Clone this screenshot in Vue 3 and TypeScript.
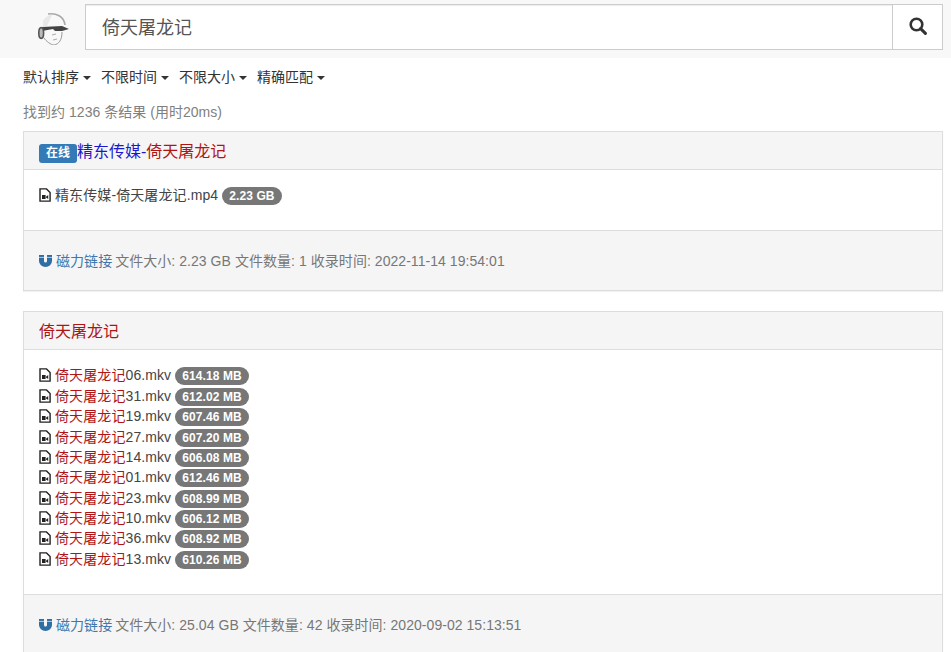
<script setup lang="ts">
interface FileRow { red: string; plain: string; size: string }
const names: [string, string][] = [
  ['06', '614.18 MB'], ['31', '612.02 MB'], ['19', '607.46 MB'], ['27', '607.20 MB'], ['14', '606.08 MB'],
  ['01', '612.46 MB'], ['23', '608.99 MB'], ['10', '606.12 MB'], ['36', '608.92 MB'], ['13', '610.26 MB'],
]
const files: FileRow[] = names.map(([n, size]) => ({ red: '倚天屠龙记', plain: n + '.mkv', size }))
const filters = ['默认排序', '不限时间', '不限大小', '精确匹配']
</script>

<template>
  <div class="page">
    <header class="top">
      <svg class="logo" width="32" height="32" viewBox="0 0 32 32">
        <path d="M5 8 C8 3 11 2 14 2 L9 13 L5 13 Z" fill="#e8e8e8" />
        <path d="M10 1 C18 0 26 3 27 12" fill="none" stroke="#aaa" stroke-width="1.6" />
        <path d="M4 14 L24 13 L31 16 L24 18 L17 18 L15 16 L4 18 Z" fill="#444" />
        <ellipse cx="3.2" cy="20" rx="2.4" ry="5.4" fill="#bbb" stroke="#555" stroke-width="1.6" />
        <path d="M6 25 C8 28 13 32 16 32 C21 31 24 27 24 19" fill="none" stroke="#999" stroke-width="1" />
        <path d="M14 22 L18 21 M15 27 L19 26" stroke="#aaa" stroke-width="1" />
      </svg>
      <div class="search">
        <div class="input">倚天屠龙记</div>
        <div class="btn">
          <svg width="18" height="18" viewBox="0 0 18 18">
            <circle cx="7.5" cy="7.5" r="5.8" fill="none" stroke="#333" stroke-width="2.6" />
            <path d="M11.6 11.6 L16.4 16.4" stroke="#333" stroke-width="3" stroke-linecap="round" />
          </svg>
        </div>
      </div>
    </header>

    <main class="content">
      <nav class="filters">
        <span v-for="f in filters" :key="f" class="filter">{{ f }}<i class="caret"></i></span>
      </nav>
      <p class="count">找到约 1236 条结果 (用时20ms)</p>

      <section class="panel">
        <h3 class="heading">
          <span class="online">在线</span><span class="blue">精东传媒-</span><span class="red">倚天屠龙记</span>
        </h3>
        <div class="body">
          <ul class="list">
            <li>
              <svg class="file" width="12" height="14" viewBox="0 0 12 14">
                <path d="M1 .9 H7.5 L11.1 4.5 V13.1 H1 Z" fill="#fff" stroke="#222" stroke-width="1.4" />
                <path d="M3 7 H6.6 V11 H3 Z M7 8.8 L9.2 7 V11 L7 9.4 Z" fill="#222" />
              </svg>
              <span class="name">精东传媒-倚天屠龙记.mp4</span>
              <span class="badge">2.23 GB</span>
            </li>
          </ul>
        </div>
        <div class="footer">
          <svg class="magnet" width="13" height="13" viewBox="0 0 13 13">
            <path d="M0 1 H5 V7 A1.5 1.5 0 0 0 8 7 V1 H13 V7 A6.5 6 0 0 1 0 7 Z" fill="#2f6ea5" />
            <path d="M0 3.4 H5 M8 3.4 H13" stroke="#f5f5f5" stroke-width=".7" />
          </svg>
          <span class="link">磁力链接</span> 文件大小: 2.23 GB 文件数量: 1 收录时间: 2022-11-14 19:54:01
        </div>
      </section>

      <section class="panel">
        <h3 class="heading"><span class="red">倚天屠龙记</span></h3>
        <div class="body">
          <ul class="list many">
            <li v-for="file in files" :key="file.plain">
              <svg class="file" width="12" height="14" viewBox="0 0 12 14">
                <path d="M1 .9 H7.5 L11.1 4.5 V13.1 H1 Z" fill="#fff" stroke="#222" stroke-width="1.4" />
                <path d="M3 7 H6.6 V11 H3 Z M7 8.8 L9.2 7 V11 L7 9.4 Z" fill="#222" />
              </svg>
              <span class="name"><span class="red">{{ file.red }}</span><span class="plain">{{ file.plain }}</span></span>
              <span class="badge">{{ file.size }}</span>
            </li>
          </ul>
        </div>
        <div class="footer">
          <svg class="magnet" width="13" height="13" viewBox="0 0 13 13">
            <path d="M0 1 H5 V7 A1.5 1.5 0 0 0 8 7 V1 H13 V7 A6.5 6 0 0 1 0 7 Z" fill="#2f6ea5" />
            <path d="M0 3.4 H5 M8 3.4 H13" stroke="#f5f5f5" stroke-width=".7" />
          </svg>
          <span class="link">磁力链接</span> 文件大小: 25.04 GB 文件数量: 42 收录时间: 2020-09-02 15:13:51
        </div>
      </section>
    </main>
  </div>
</template>

<style>
html, body { margin: 0; background: #fff; overflow: hidden; }
</style>

<style scoped>
.page {
  width: 951px;
  height: 652px;
  overflow: hidden;
  font-family: "Liberation Sans", "Noto Sans CJK SC", sans-serif;
  font-size: 14px;
  line-height: 20px;
  color: #333;
}
.top {
  display: flex;
  align-items: flex-start;
  height: 58px;
  box-sizing: border-box;
  padding: 4px 8px 0 38px;
  background: #f8f8f8;
}
.logo { margin: 9px 15px 0 0; flex: none; }
.search { display: flex; flex: 1; height: 46px; }
.input {
  flex: 1;
  box-sizing: border-box;
  border: 1px solid #ccc;
  border-right: 0;
  background: #fff;
  padding: 11px 16px 9px;
  font-size: 18px;
  line-height: 24px;
  color: #555;
  box-shadow: inset 0 1px 1px rgba(0, 0, 0, .075);
}
.btn {
  width: 51px;
  box-sizing: border-box;
  border: 1px solid #ccc;
  background: #fff;
  padding-bottom: 3px;
  display: flex;
  align-items: center;
  justify-content: center;
}
.content { padding: 0 8px 0 23px; }
.filters { display: flex; gap: 10px; padding-top: 9px; height: 21px; }
.filter { color: #333; }
.caret {
  display: inline-block;
  margin-left: 4px;
  vertical-align: middle;
  border-top: 4px solid #333;
  border-left: 4px solid transparent;
  border-right: 4px solid transparent;
}
.count { margin: 14px 0 0; height: 29px; color: #808080; letter-spacing: .03px; }
.panel {
  border: 1px solid #ddd;
  margin-bottom: 20px;
  box-shadow: 0 1px 1px rgba(0, 0, 0, .05);
}
.heading {
  margin: 0;
  height: 36px;
  padding: 1px 15px 0;
  background: #f5f5f5;
  border-bottom: 1px solid #ddd;
  font-size: 16px;
  font-weight: 400;
  line-height: 37px;
}
.online {
  display: inline-block;
  background: #337ab7;
  color: #fff;
  font-size: 12px;
  font-weight: 700;
  line-height: 12px;
  padding: 3px 7px 4px;
  border-radius: 3px;
}
.blue { color: #1a1acc; }
.red { color: #b01515; }
.body { padding: 15px; }
.list { list-style: none; margin: 0; padding: 0 0 10px; }
.list li { display: flex; align-items: center; height: 20px; line-height: 20px; }
.many { margin-top: .21px; }
.many li { height: 20.38px; }
.file { flex: none; margin-right: 4px; }
.name { color: #444; white-space: nowrap; letter-spacing: .1px; }
.badge {
  margin-left: 4px;
  background: #777;
  color: #fff;
  font-size: 12px;
  font-weight: 700;
  line-height: 12px;
  padding: 3px 7px;
  letter-spacing: .1px;
  border-radius: 10px;
  position: relative;
  top: 1px;
}
.footer {
  background: #f5f5f5;
  border-top: 1px solid #ddd;
  padding: 20px 15px 19px;
  color: #777;
  height: 20px;
  letter-spacing: .05px;
}
.magnet { vertical-align: -1px; margin-right: 4px; }
.link { color: #3f78ad; margin-right: -1px; }
</style>
